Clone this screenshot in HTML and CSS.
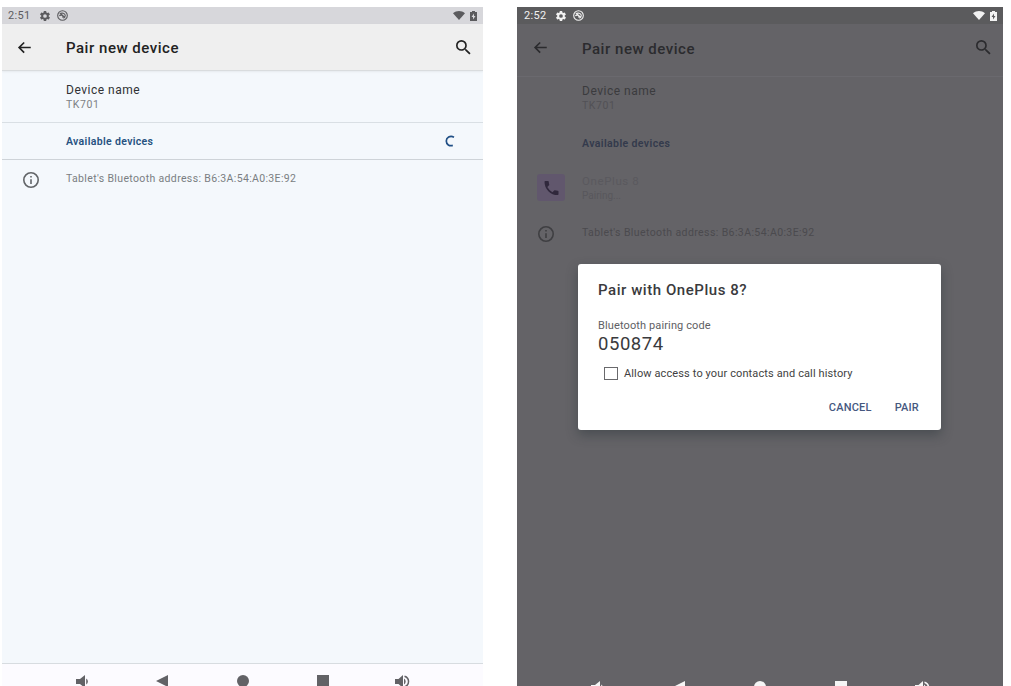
FILE: index.html
```html
<!DOCTYPE html>
<html lang="en">
<head>
    <meta charset="UTF-8">
    <meta name="viewport" content="width=device-width, initial-scale=1.0">
    <title>Pair new device</title>
    <link rel="stylesheet" href="styles.css">
</head>
<body>
    <!-- Shared icons -->
    <svg class="sprite" width="0" height="0">
        <symbol id="gear" viewBox="0 0 24 24"><path fill-rule="evenodd" d="M19.4 13a7.500 7.500 0 0 0 0-2l2.100-1.650a.5.5 0 0 0 .12-.64l-2-3.460a.5.5 0 0 0-.61-.22l-2.490 1a7.300 7.300 0 0 0-1.690-.98L14.450 2.400a.5.5 0 0 0-.49-.4h-4a.5.5 0 0 0-.49.42L9.100 5.070a7.700 7.700 0 0 0-1.690.98l-2.490-1a.5.5 0 0 0-.61.22l-2 3.460a.5.5 0 0 0 .12.64L4.540 11a7.900 7.900 0 0 0 0 2l-2.110 1.650a.5.5 0 0 0-.12.640l2 3.460c.12.22.39.3.61.22l2.490-1c.52.4 1.080.73 1.690.98l.38 2.650c.03.24.24.4.49.4h4c.25 0 .46-.16.49-.4l.38-2.650a7.300 7.300 0 0 0 1.690-.98l2.490 1c.23.09.49 0 .61-.22l2-3.460a.5.5 0 0 0-.12-.64zM12 15.700a3.700 3.700 0 1 1 0-7.400 3.700 3.700 0 0 1 0 7.400z"/></symbol>
        <symbol id="cast" viewBox="0 0 24 24"><g fill="none" stroke="currentColor" stroke-width="2.400"><circle cx="12" cy="12" r="10.500"/><path d="M6 9c4-4 12-2 12 3 0 3-2 5-4 6M5 13c4-4 9-1 8 4M7 7l10 9"/></g></symbol>
        <symbol id="wifi" viewBox="0 0 24 18"><path d="M0 4.500C7-1.500 17-1.500 24 4.500L12 18z"/></symbol>
        <symbol id="battery" viewBox="0 0 14 20"><path fill-rule="evenodd" d="M4 0h6v2h4v18H0V2h4zM8 5l-5 7h3v5l5-7H8z"/></symbol>
        <symbol id="back" viewBox="0 0 24 24"><path d="M22 10.800H6.400l6-6L10.500 3 1.500 12l9 9 1.900-1.800-6-6H22z"/></symbol>
        <symbol id="search" viewBox="3 3 18 18"><path d="M15.500 14h-.79l-.28-.27A6.470 6.470 0 0 0 16 9.500 6.500 6.500 0 1 0 9.500 16c1.610 0 3.090-.59 4.230-1.570l.27.280v.79l5 4.990L20.490 19zm-6 0C7.010 14 5 11.990 5 9.500S7.010 5 9.500 5 14 7.010 14 9.500 11.990 14 9.500 14z"/></symbol>
        <symbol id="info" viewBox="2 2 20 20"><path d="M11 7h2v2h-2zm0 4h2v6h-2zm1-9a10 10 0 1 0 0 20 10 10 0 0 0 0-20zm0 18a8 8 0 1 1 0-16 8 8 0 0 1 0 16z"/></symbol>
        <symbol id="phone" viewBox="3 3 18 18"><path d="M6.620 10.790a15.150 15.150 0 0 0 6.590 6.590l2.200-2.200a1 1 0 0 1 1.020-.24c1.120.37 2.330.57 3.570.57a1 1 0 0 1 1 1V20a1 1 0 0 1-1 1A17 17 0 0 1 3 4a1 1 0 0 1 1-1h3.500a1 1 0 0 1 1 1c0 1.250.2 2.450.57 3.570a1 1 0 0 1-.25 1.020z"/></symbol>
        <symbol id="vol-down" viewBox="0 0 13 13"><path d="M0 4h4l5-4v13L4 9H0zM10.200 3.500a3.500 3.500 0 0 1 0 6z"/></symbol>
        <symbol id="vol-up" viewBox="0 0 15 13"><path d="M0 4h3.500L8 0v13L3.500 9H0zM9 3.500a3.500 3.500 0 0 1 0 6z"/><path d="M9.500 1.200a5.500 5.500 0 0 1 0 10.600" fill="none" stroke="currentColor" stroke-width="1.500"/></symbol>
        <symbol id="nav-back" viewBox="0 0 12 12"><path d="M12 0v12L0 6z"/></symbol>
        <symbol id="nav-home" viewBox="0 0 12 12"><circle cx="6" cy="6" r="6"/></symbol>
        <symbol id="nav-recent" viewBox="0 0 12 12"><path d="M0 0h12v12H0z"/></symbol>
    </svg>

    <main class="screens">
        <section class="screen">
            <div class="status-bar">
                <span class="clock">2:51</span>
                <svg class="icon gear"><use href="#gear"/></svg>
                <svg class="icon cast"><use href="#cast"/></svg>
                <svg class="icon wifi"><use href="#wifi"/></svg>
                <svg class="icon battery"><use href="#battery"/></svg>
            </div>
            <header class="app-bar">
                <svg class="icon back"><use href="#back"/></svg>
                <h1 class="title">Pair new device</h1>
                <svg class="icon search"><use href="#search"/></svg>
            </header>
            <div class="row device-row">
                <div class="text">
                    <div class="name">Device name</div>
                    <div class="value">TK701</div>
                </div>
            </div>
            <div class="row available-row">
                <div class="section-label">Available devices</div>
                <svg class="spinner" viewBox="0 0 10 12"><path d="M9 2.200C5 .2 1.300 2.500 1.300 6S4.500 11.500 7.800 10.400"/></svg>
            </div>
            <div class="row info-row">
                <div class="lead"><svg class="icon info"><use href="#info"/></svg></div>
                <div class="address">Tablet's Bluetooth address: B6:3A:54:A0:3E:92</div>
            </div>
            <nav class="nav-bar">
                <span><svg class="icon vol-down"><use href="#vol-down"/></svg></span>
                <span><svg class="icon nav-icon"><use href="#nav-back"/></svg></span>
                <span><svg class="icon nav-icon"><use href="#nav-home"/></svg></span>
                <span><svg class="icon nav-icon"><use href="#nav-recent"/></svg></span>
                <span><svg class="icon vol-up"><use href="#vol-up"/></svg></span>
            </nav>
        </section>

        <section class="screen dimmed">
            <div class="status-bar">
                <span class="clock">2:52</span>
                <svg class="icon gear"><use href="#gear"/></svg>
                <svg class="icon cast"><use href="#cast"/></svg>
                <svg class="icon wifi"><use href="#wifi"/></svg>
                <svg class="icon battery"><use href="#battery"/></svg>
            </div>
            <header class="app-bar">
                <svg class="icon back"><use href="#back"/></svg>
                <h1 class="title">Pair new device</h1>
                <svg class="icon search"><use href="#search"/></svg>
            </header>
            <div class="row device-row">
                <div class="text">
                    <div class="name">Device name</div>
                    <div class="value">TK701</div>
                </div>
            </div>
            <div class="row available-row">
                <div class="section-label">Available devices</div>
            </div>
            <div class="row phone-row">
                <div class="lead"><span class="tile"><svg class="icon phone"><use href="#phone"/></svg></span></div>
                <div class="text">
                    <div class="phone-name">OnePlus 8</div>
                    <div class="phone-state">Pairing...</div>
                </div>
            </div>
            <div class="row info-row">
                <div class="lead"><svg class="icon info"><use href="#info"/></svg></div>
                <div class="address">Tablet's Bluetooth address: B6:3A:54:A0:3E:92</div>
            </div>
            <nav class="nav-bar">
                <span><svg class="icon vol-down"><use href="#vol-down"/></svg></span>
                <span><svg class="icon nav-icon"><use href="#nav-back"/></svg></span>
                <span><svg class="icon nav-icon"><use href="#nav-home"/></svg></span>
                <span><svg class="icon nav-icon"><use href="#nav-recent"/></svg></span>
                <span><svg class="icon vol-up"><use href="#vol-up"/></svg></span>
            </nav>

            <div class="dialog">
                <h2 class="dialog-title">Pair with OnePlus 8?</h2>
                <div class="code-label">Bluetooth pairing code</div>
                <div class="code">050874</div>
                <label class="allow"><span class="checkbox"></span><span>Allow access to your contacts and call history</span></label>
                <div class="actions">
                    <span class="cancel">CANCEL</span>
                    <span class="pair">PAIR</span>
                </div>
            </div>
        </section>
    </main>
</body>
</html>
```
FILE: styles.css
```css
* {
    box-sizing: border-box;
}
body {
    margin: 0;
    height: 686px;
    overflow: hidden;
    background: #fff;
    font-family: Roboto, "Liberation Sans", sans-serif;
    white-space: nowrap;
}
h1, h2 {
    margin: 0;
    font-weight: 500;
}
.sprite {
    display: none;
}
.icon {
    display: block;
    flex: none;
    fill: currentColor;
}
.screens {
    display: flex;
    gap: 34px;
    height: 686px;
    padding: 7px 0 0 2px;
}
.screen {
    position: relative;
    display: flex;
    flex-direction: column;
    width: 481px;
    height: 679px;
    overflow: hidden;
    background: #f4f8fc;
}

/* Status bar */
.status-bar {
    display: flex;
    align-items: center;
    height: 17px;
    padding: 0 6px;
    background: #d7d7db;
    color: #5b5b5e;
}
.clock {
    width: 31px;
    font-size: 11px;
    line-height: 17px;
    letter-spacing: 0.3px;
}
.gear {
    width: 12px;
    height: 12px;
}
.cast {
    width: 11px;
    height: 11px;
    margin-left: 6px;
}
.wifi {
    width: 12px;
    height: 9px;
    margin-left: auto;
}
.battery {
    width: 7px;
    height: 10px;
    margin-left: 5px;
}

/* App bar */
.app-bar {
    display: flex;
    align-items: center;
    height: 47px;
    padding: 0 12px 0 15px;
    background: #efefef;
    border-bottom: 1px solid #d9dcde;
    color: #222;
    box-shadow: 0 1px 2px rgba(0, 0, 0, 0.06);
}
.back {
    width: 15px;
    height: 15px;
}
.title {
    margin-left: 34px;
    padding-top: 2px;
    font-size: 15px;
    line-height: 20px;
    letter-spacing: 0.52px;
}
.search {
    width: 15px;
    height: 15px;
    margin-left: auto;
}

/* Settings rows */
.row {
    display: flex;
    padding-left: 64px;
}
.lead {
    flex: none;
    width: 64px;
}
.device-row {
    height: 52px;
    padding-top: 11px;
    border-bottom: 1px solid #d9dfe4;
}
.name {
    font-size: 12px;
    line-height: 16px;
    letter-spacing: 0.5px;
    color: #303235;
}
.value {
    font-size: 10.5px;
    line-height: 13px;
    letter-spacing: 0.6px;
    color: #7d8184;
}
.available-row {
    align-items: center;
    height: 37px;
    padding-right: 28px;
    border-bottom: 1px solid #ced3d8;
}
.section-label {
    font-size: 10.5px;
    font-weight: 600;
    letter-spacing: 0.34px;
    color: #26517f;
}
.spinner {
    width: 10px;
    height: 12px;
    margin-left: auto;
    fill: none;
    stroke: #204f85;
    stroke-width: 1.700;
}
.info-row {
    padding: 12px 0 0;
}
.info {
    width: 16px;
    height: 16px;
    margin-left: 21px;
    color: #626568;
}
.address {
    font-size: 10.5px;
    line-height: 13px;
    letter-spacing: 0.35px;
    color: #7a7e82;
}

/* Navigation bar */
.nav-bar {
    display: flex;
    height: 23px;
    margin-top: auto;
    padding: 11px 40px 0;
    background: #fcfbff;
    border-top: 1px solid #d7dce0;
    color: #626266;
}
.nav-bar span {
    display: flex;
    flex: 1;
    justify-content: center;
}
.nav-icon {
    width: 12px;
    height: 12px;
}
.vol-down {
    width: 13px;
    height: 13px;
}
.vol-up {
    width: 15px;
    height: 13px;
}

/* Screen behind the dialog */
.dimmed {
    width: 486px;
    background: #646367;
}
.dimmed .status-bar {
    padding-left: 7px;
    background: #5b5b5d;
    color: #f2f2f2;
}
.dimmed .app-bar {
    height: 53px;
    padding: 0 12px 5px 16px;
    background: #646367;
    border-color: #6a696e;
    box-shadow: none;
    color: #2b2b2e;
}
.dimmed .row {
    border-color: transparent;
}
.dimmed .device-row,
.dimmed .available-row {
    padding-left: 65px;
}
.dimmed .device-row {
    height: 48px;
    padding-top: 6px;
}
.dimmed .name {
    color: #3b3b3e;
}
.dimmed .value {
    color: #525156;
}
.dimmed .section-label {
    letter-spacing: 0.4px;
    color: #333a4c;
}
.dimmed .lead {
    width: 65px;
}
.phone-row {
    height: 52px;
    padding: 12px 0 0;
}
.tile {
    display: flex;
    align-items: center;
    justify-content: center;
    width: 28px;
    height: 27px;
    margin-left: 20px;
    background: #61576d;
    border-radius: 3px;
}
.phone {
    width: 15px;
    height: 14px;
    color: #30283c;
}
.phone-name {
    font-size: 11.5px;
    line-height: 15px;
    letter-spacing: 0.6px;
    color: #5a595e;
}
.phone-state {
    font-size: 10px;
    line-height: 13px;
    color: #58575c;
}
.dimmed .info {
    color: #3f3f42;
}
.dimmed .address {
    letter-spacing: 0.4px;
    color: #4b4a4e;
}
.dimmed .nav-bar {
    height: 5px;
    padding-top: 0;
    background: #646367;
    border: none;
    color: #f5f5f5;
}

/* Pairing dialog */
.dialog {
    position: absolute;
    left: 61px;
    top: 257px;
    width: 363px;
    height: 166px;
    padding: 16px 20px 0;
    background: #fff;
    border-radius: 3px;
    box-shadow: 0 5px 12px rgba(40, 50, 55, 0.45);
    color: #3a3a3d;
}
.dialog-title {
    font-size: 15px;
    line-height: 20px;
    letter-spacing: 0.55px;
}
.code-label {
    margin-top: 19px;
    font-size: 11px;
    line-height: 14px;
    letter-spacing: 0.12px;
    color: #606064;
}
.code {
    font-size: 18.5px;
    line-height: 22px;
    letter-spacing: 0.55px;
}
.allow {
    display: flex;
    align-items: center;
    gap: 6px;
    height: 16px;
    margin-top: 10px;
    padding-left: 6px;
    font-size: 11px;
    letter-spacing: 0.12px;
    color: #3f3f42;
}
.checkbox {
    width: 14px;
    height: 13px;
    border: 1.500px solid #69696c;
}
.actions {
    display: flex;
    justify-content: flex-end;
    gap: 23px;
    margin-top: 20px;
    padding-right: 2px;
    font-size: 11px;
    font-weight: 500;
    line-height: 14px;
    letter-spacing: 0.2px;
    color: #46587f;
}
```
